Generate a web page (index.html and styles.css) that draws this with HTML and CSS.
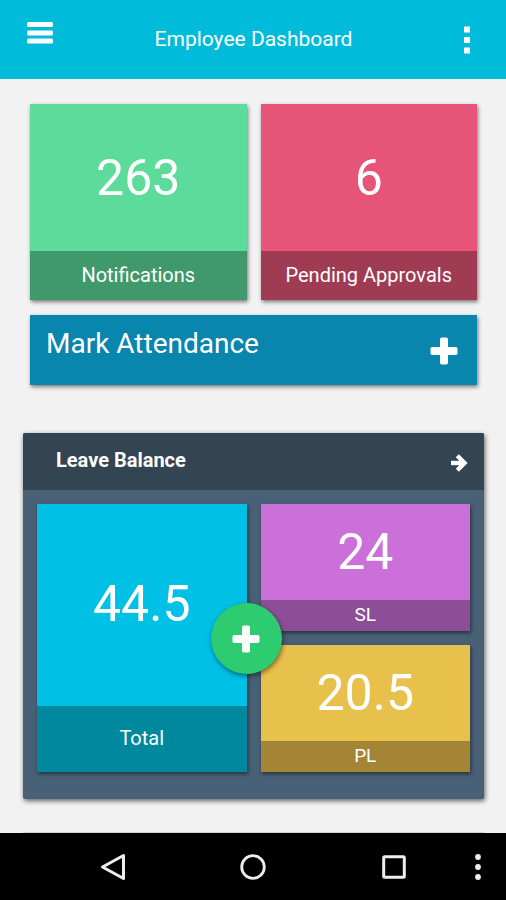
FILE: index.html
```html
<!DOCTYPE html>
<html lang="en">
<head>
  <meta charset="utf-8">
  <meta name="viewport" content="width=device-width, initial-scale=1">
  <title>Employee Dashboard</title>
  <link rel="stylesheet" href="styles.css">
</head>
<body>
  <header class="topbar">
    <button class="icon-button" type="button" aria-label="Menu">
      <svg width="26" height="22" viewBox="0 0 26 22" fill="#fff"><rect y="0" width="26" height="5" rx="1.5"/><rect y="8.4" width="26" height="5" rx="1.5"/><rect y="16.5" width="26" height="5" rx="1.5"/></svg>
    </button>
    <h1 class="topbar-title">Employee Dashboard</h1>
    <button class="icon-button icon-button-more" type="button" aria-label="More options">
      <svg width="6" height="28" viewBox="0 0 6 28" fill="#fff"><rect y="0.5" width="6" height="6" rx="0.5"/><rect y="11" width="6" height="6" rx="0.5"/><rect y="21.5" width="6" height="6" rx="0.5"/></svg>
    </button>
  </header>

  <main class="content">
    <section class="summary">
      <a class="tile tile-green" href="#notifications">
        <span class="tile-value">263</span>
        <span class="tile-label">Notifications</span>
      </a>
      <a class="tile tile-pink" href="#approvals">
        <span class="tile-value">6</span>
        <span class="tile-label">Pending Approvals</span>
      </a>
      <button class="attendance" type="button">
        <span>Mark Attendance</span>
        <svg class="attendance-icon" width="28" height="28" viewBox="0 0 28 28" fill="#fff"><rect x="10" y="0.5" width="8" height="27" rx="1.8"/><rect x="0.5" y="10" width="27" height="8" rx="1.8"/></svg>
      </button>
    </section>

    <section class="panel">
      <header class="panel-head">
        <h2 class="panel-title">Leave Balance</h2>
        <a class="panel-link" href="#leave" aria-label="Open leave balance">
          <svg width="18" height="20" viewBox="0 0 18 20" fill="none" stroke="#fff" stroke-width="4.4"><path d="M1 10H14"/><path d="M7.3 2.8L14.5 10L7.3 17.2"/></svg>
        </a>
      </header>
      <div class="balances">
        <a class="tile tile-cyan" href="#total">
          <span class="tile-value">44.5</span>
          <span class="tile-label">Total</span>
        </a>
        <a class="tile tile-small tile-purple" href="#sl">
          <span class="tile-value">24</span>
          <span class="tile-label">SL</span>
        </a>
        <a class="tile tile-small tile-yellow" href="#pl">
          <span class="tile-value">20.5</span>
          <span class="tile-label">PL</span>
        </a>
        <button class="add-button" type="button" aria-label="Apply for leave">
          <svg width="28" height="28" viewBox="0 0 28 28" fill="#fff"><rect x="10" y="0.5" width="8" height="27" rx="1.8"/><rect x="0.5" y="10" width="27" height="8" rx="1.8"/></svg>
        </button>
      </div>
    </section>
    <div class="next-card"></div>
  </main>

  <nav class="system-nav" aria-label="System">
    <button class="icon-button" type="button" aria-label="Back">
      <svg width="26" height="28" viewBox="0 0 26 28" fill="none" stroke="#eee" stroke-width="3" stroke-linejoin="round"><path d="M23.5 2.5V25.5L2.5 14Z"/></svg>
    </button>
    <button class="icon-button" type="button" aria-label="Home">
      <svg width="26" height="26" viewBox="0 0 26 26" fill="none" stroke="#eee" stroke-width="2.8"><circle cx="13" cy="13" r="11.3"/></svg>
    </button>
    <button class="icon-button" type="button" aria-label="Recent apps">
      <svg width="24" height="24" viewBox="0 0 24 24" fill="none" stroke="#eee" stroke-width="3"><rect x="1.7" y="1.7" width="20.6" height="20.6" rx="1"/></svg>
    </button>
    <button class="icon-button" type="button" aria-label="Options">
      <svg width="6" height="26" viewBox="0 0 6 26" fill="#eee"><circle cx="3" cy="3" r="2.9"/><circle cx="3" cy="13" r="2.9"/><circle cx="3" cy="23" r="2.9"/></svg>
    </button>
  </nav>
</body>
</html>
```
FILE: styles.css
```css
* {
  box-sizing: border-box;
}

body {
  display: flex;
  flex-direction: column;
  min-height: 100vh;
  margin: 0;
  background: #f2f2f2;
  color: #fff;
  font-family: Roboto, "Liberation Sans", sans-serif;
}

button {
  border: 0;
  padding: 0;
  background: none;
  color: inherit;
  font: inherit;
  cursor: pointer;
}

svg {
  display: block;
}

a {
  color: inherit;
  text-decoration: none;
}

.topbar {
  display: flex;
  justify-content: space-between;
  align-items: flex-start;
  padding: 22px 36px 23px 27px;
  background: #00bcda;
}

.topbar-title {
  margin: 0;
  font-size: 21px;
  font-weight: 400;
  line-height: 34px;
}

.icon-button-more {
  padding: 4px 0 0 10px;
}

.content {
  flex: 1;
  padding: 25px 22px 0 23px;
}

.summary {
  display: grid;
  grid-template-columns: 1fr 1fr;
  gap: 15px 14px;
  padding: 0 7px;
}

.tile {
  display: flex;
  flex-direction: column;
  box-shadow: 1px 2px 4px rgba(0, 0, 0, 0.5);
  text-align: center;
}

.tile-value {
  flex: 1;
  padding: 43px 0 42px;
  font-size: 50px;
  line-height: 62px;
}

.tile-label {
  padding: 12px 0 13px;
  font-size: 20px;
  line-height: 24px;
}

.tile-green { background: #5cdb9a; }
.tile-green .tile-label { background: #40996b; }
.tile-pink { background: #e65478; }
.tile-pink .tile-label { background: #a03b54; }
.tile-purple { background: #cb6fd9; }
.tile-purple .tile-label { background: #8d4e97; }
.tile-yellow { background: #e8c14c; }
.tile-yellow .tile-label { background: #a38535; }

.attendance {
  grid-column: 1 / -1;
  display: flex;
  justify-content: space-between;
  align-items: flex-start;
  padding: 11px 19px 20px 16px;
  background: #0886ae;
  box-shadow: 1px 2px 4px rgba(0, 0, 0, 0.5);
  font-size: 28px;
  line-height: 36px;
}

.attendance-icon {
  margin-top: 11px;
}

.panel {
  margin-top: 48px;
  border-radius: 2px;
  background: #496177;
  box-shadow: 1px 2px 5px rgba(0, 0, 0, 0.6);
}

.panel-head {
  display: flex;
  justify-content: space-between;
  align-items: flex-start;
  padding: 15px 16px 17px 33px;
  border-radius: 2px 2px 0 0;
  background: #334452;
}

.panel-title {
  margin: 0;
  font-size: 20px;
  font-weight: 700;
  line-height: 24px;
}

.panel-link {
  padding-top: 5px;
}

.balances {
  position: relative;
  display: grid;
  grid-template-columns: 1fr 1fr;
  gap: 14px;
  padding: 14px 14px 27px;
}

.tile-cyan {
  grid-row: span 2;
  background: #00c0e6;
}

.tile-cyan .tile-value {
  padding: 69px 0 0;
}

.tile-cyan .tile-label {
  padding: 20px 0 22px;
  background: #00889f;
}

.tile-small .tile-value {
  padding: 17px 0;
}

.tile-small .tile-label {
  padding: 3px 0 4px;
  font-size: 19px;
}

/* Floats over the point where the balance tiles meet */
.add-button {
  position: absolute;
  top: 113px;
  left: 50%;
  display: flex;
  justify-content: center;
  align-items: center;
  width: 71px;
  height: 71px;
  margin-left: -43px;
  border-radius: 50%;
  background: #2ecc70;
  box-shadow: 1px 2px 5px rgba(0, 0, 0, 0.5);
}

.next-card {
  height: 1px;
  margin-top: 33px;
  background: #d0d0d0;
}

.system-nav {
  display: grid;
  grid-template-columns: 1fr 1fr 1fr 28px;
  place-items: center;
  height: 67px;
  padding: 0 14px 0 43px;
  background: #000;
}
```
